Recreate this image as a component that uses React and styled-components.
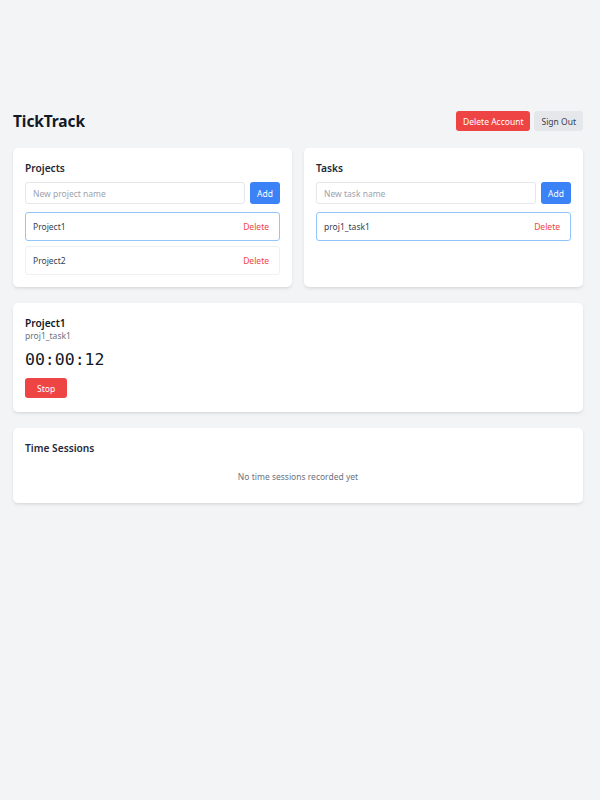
import styled, { createGlobalStyle } from "styled-components";

const GlobalStyle = createGlobalStyle`
  body {
    margin: 0;
    background: #f3f4f6;
    font-family: "Noto Sans", "Open Sans", sans-serif;
    color: #1f2937;
  }
`;

const Page = styled.div`
  padding: 111px 17px 40px 13px;
  display: flex;
  flex-direction: column;
  gap: 16px;
`;

const Header = styled.header`
  display: flex;
  align-items: center;
  justify-content: space-between;
  height: 20px;
  margin-bottom: 1px;
`;

const Logo = styled.h1`
  margin: 0;
  font-size: 15.5px;
  font-weight: 700;
  color: #111827;
  line-height: 20px;
  letter-spacing: -0.1px;
`;

const HeaderActions = styled.div`
  display: flex;
  gap: 4px;
`;

const Button = styled.button`
  display: block;
  border: none;
  border-radius: 3px;
  height: ${(p) => (p.$tall ? 22 : 20)}px;
  padding: 0 ${(p) => p.$px || 7}px;
  font-family: inherit;
  font-size: 8.5px;
  cursor: pointer;
  background: ${(p) =>
    p.$variant === "red" ? "#ef4444" : p.$variant === "blue" ? "#3b82f6" : "#e5e7eb"};
  color: ${(p) => (p.$variant === "gray" ? "#374151" : "#ffffff")};
`;

const Grid = styled.div`
  display: grid;
  grid-template-columns: 1fr 1fr;
  gap: 12px;
`;

const Card = styled.section`
  background: #ffffff;
  border-radius: 5px;
  padding: ${(p) => p.$pad || "12px"};
  box-shadow: 0 2px 4px -1px rgba(0, 0, 0, 0.12), 0 1px 2px -1px rgba(0, 0, 0, 0.08);
`;

const CardTitle = styled.h2`
  margin: 0 0 6px;
  font-size: 10.2px;
  font-weight: 600;
  line-height: 16px;
  color: #1f2937;
`;

const AddRow = styled.div`
  display: flex;
  gap: 5px;
  margin-bottom: 8px;
`;

const Input = styled.input`
  flex: 1;
  min-width: 0;
  height: 22px;
  box-sizing: border-box;
  border: 1px solid #e5e7eb;
  border-radius: 3px;
  padding: 0 7px;
  font-family: inherit;
  font-size: 8.5px;
  color: #374151;
  outline: none;
  &::placeholder {
    color: #9ca3af;
  }
`;

const List = styled.div`
  display: flex;
  flex-direction: column;
  gap: 5px;
`;

const Item = styled.div`
  display: flex;
  align-items: center;
  justify-content: space-between;
  height: 29px;
  box-sizing: border-box;
  padding: 0 10px 0 7px;
  border: 1px solid ${(p) => (p.$active ? "#93c5fd" : "#eef0f2")};
  border-radius: 3px;
  font-size: 8.5px;
  color: #374151;
`;

const DeleteLink = styled.span`
  color: #ef4444;
  font-size: 8.5px;
`;

const TimerProject = styled.div`
  font-size: 10.2px;
  font-weight: 600;
  line-height: 14px;
  color: #111827;
`;

const TimerTask = styled.div`
  font-size: 8.5px;
  line-height: 12px;
  color: #6b7280;
`;

const Clock = styled.div`
  margin: 8px 0;
  font-family: "DejaVu Sans Mono", "Liberation Mono", monospace;
  font-size: 16.5px;
  line-height: 20px;
  color: #111827;
`;

const Empty = styled.div`
  padding: 8px 0;
  text-align: center;
  font-size: 8.5px;
  line-height: 13px;
  color: #6b7280;
`;

const projects = [
  { name: "Project1", active: true },
  { name: "Project2", active: false },
];

const tasks = [{ name: "proj1_task1", active: true }];

export default function App() {
  return (
    <>
      <GlobalStyle />
      <Page>
        <Header>
          <Logo>TickTrack</Logo>
          <HeaderActions>
            <Button $variant="red">Delete Account</Button>
            <Button $variant="gray">Sign Out</Button>
          </HeaderActions>
        </Header>

        <Grid>
          <Card>
            <CardTitle>Projects</CardTitle>
            <AddRow>
              <Input placeholder="New project name" />
              <Button $variant="blue" $tall>Add</Button>
            </AddRow>
            <List>
              {projects.map((p) => (
                <Item key={p.name} $active={p.active}>
                  {p.name}
                  <DeleteLink>Delete</DeleteLink>
                </Item>
              ))}
            </List>
          </Card>
          <Card>
            <CardTitle>Tasks</CardTitle>
            <AddRow>
              <Input placeholder="New task name" />
              <Button $variant="blue" $tall>Add</Button>
            </AddRow>
            <List>
              {tasks.map((t) => (
                <Item key={t.name} $active={t.active}>
                  {t.name}
                  <DeleteLink>Delete</DeleteLink>
                </Item>
              ))}
            </List>
          </Card>
        </Grid>

        <Card $pad="13px 12px 14px">
          <TimerProject>Project1</TimerProject>
          <TimerTask>proj1_task1</TimerTask>
          <Clock>00:00:12</Clock>
          <Button $variant="red" $px={12}>Stop</Button>
        </Card>

        <Card>
          <CardTitle>Time Sessions</CardTitle>
          <Empty>No time sessions recorded yet</Empty>
        </Card>
      </Page>
    </>
  );
}
